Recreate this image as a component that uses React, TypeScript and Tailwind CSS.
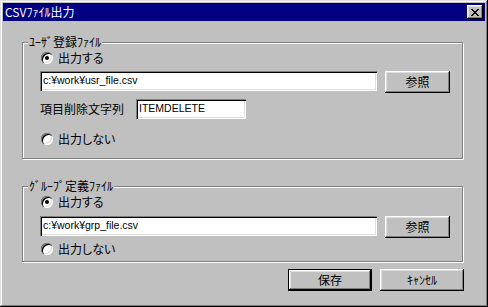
import React from 'react';

const raised =
  'bg-[#c0c0c0] shadow-[inset_-1px_-1px_0_#000,inset_1px_1px_0_#fff,inset_-2px_-2px_0_#808080,inset_2px_2px_0_#dfdfdf]';
const sunken =
  'bg-white shadow-[inset_1px_1px_0_#808080,inset_2px_2px_0_#000,inset_-1px_-1px_0_#fff,inset_-2px_-2px_0_#dfdfdf]';
const latin = "font-['Liberation_Sans','Noto_Sans_CJK_JP',sans-serif]";

const Radio = ({ checked, label }: { checked?: boolean; label: string }) => (
  <div className="flex items-center h-[14px] ml-[18px]">
    <span className="relative w-[12px] h-[12px] rounded-full bg-white shadow-[inset_1px_1px_0_#808080,inset_2px_2px_0_#000,inset_-1px_-1px_0_#fff,inset_-2px_-2px_0_#dfdfdf]">
      {checked && <span className="absolute left-[4px] top-[4px] w-[4px] h-[4px] rounded-full bg-black" />}
    </span>
    <span className="ml-[5px] leading-none [font-feature-settings:'palt']">{label}</span>
  </div>
);

const TextBox = ({ value, className }: { value: string; className: string }) => (
  <div className={`${sunken} ${className} h-[20px] flex items-center pl-[3px] text-[10.5px] ${latin}`}>{value}</div>
);

const Button = ({ label, def, className }: { label: string; def?: boolean; className?: string }) => (
  <div
    className={`${className ?? ''} h-[22px] flex items-center justify-center ${
      def
        ? 'bg-[#c0c0c0] border border-black shadow-[inset_-1px_-1px_0_#000,inset_1px_1px_0_#fff,inset_-2px_-2px_0_#808080,inset_2px_2px_0_#dfdfdf]'
        : raised
    }`}
  >
    {label}
  </div>
);

const Group = ({ title, className, children }: { title: string; className: string; children: React.ReactNode }) => (
  <div className={`relative w-[441px] border border-[#808080] shadow-[1px_1px_0_#fff,inset_1px_1px_0_#fff] ${className}`}>
    <span className="absolute left-[5px] top-[-8px] px-[1px] bg-[#c0c0c0] leading-[14px]">{title}</span>
    {children}
  </div>
);

export default function App() {
  return (
    <div className="w-[488px] h-[307px] bg-[#c0c0c0] p-[3px] flex flex-col text-[12px] text-black font-['Noto_Sans_CJK_JP',sans-serif] shadow-[inset_-1px_-1px_0_#000,inset_1px_1px_0_#dfdfdf,inset_-2px_-2px_0_#808080,inset_2px_2px_0_#fff]">
      {/* title bar */}
      <div className="h-[18px] bg-[#000080] flex items-center justify-between pl-[2px] pr-[2px]">
        <span className="text-white leading-none">CSVﾌｧｲﾙ出力</span>
        <div className={`${raised} w-[16px] h-[14px] flex items-center justify-center`}>
          <svg width="8" height="7" viewBox="0 0 8 7" shapeRendering="crispEdges">
            <path
              d="M0 0h2v1H0zM6 0h2v1H6zM1 1h2v1H1zM5 1h2v1H5zM2 2h4v1H2zM3 3h2v1H3zM2 4h4v1H2zM1 5h2v1H1zM5 5h2v1H5zM0 6h2v1H0zM6 6h2v1H6z"
              fill="#000"
            />
          </svg>
        </div>
      </div>

      <div className="pl-[19px] pt-[21px]">
        <Group title="ﾕｰｻﾞ登録ﾌｧｲﾙ" className="h-[117px]">
          <div className="mt-[8px]">
            <Radio checked label="出力する" />
          </div>
          <div className="flex items-start mt-[6px] ml-[17px]">
            <TextBox value="c:¥work¥usr_file.csv" className="w-[337px]" />
            <Button label="参照" className="ml-[8px] w-[65px]" />
          </div>
          <div className="flex items-center mt-[6px] ml-[17px]">
            <span className="w-[96px] leading-none">項目削除文字列</span>
            <TextBox value="ITEMDELETE" className="w-[110px]" />
          </div>
          <div className="mt-[13px]">
            <Radio label="出力しない" />
          </div>
        </Group>

        <Group title="ｸﾞﾙｰﾌﾟ定義ﾌｧｲﾙ" className="h-[76px] mt-[27px]">
          <div className="mt-[8px]">
            <Radio checked label="出力する" />
          </div>
          <div className="flex items-start mt-[7px] ml-[17px]">
            <TextBox value="c:¥work¥grp_file.csv" className="w-[337px]" />
            <Button label="参照" className="ml-[8px] w-[65px]" />
          </div>
          <div className="mt-[4px]">
            <Radio label="出力しない" />
          </div>
        </Group>

        <div className="w-[442px] flex justify-end gap-[8px] mt-[7px]">
          <Button def label="保存" className="w-[84px]" />
          <Button label="ｷｬﾝｾﾙ" className="w-[84px]" />
        </div>
      </div>
    </div>
  );
}
